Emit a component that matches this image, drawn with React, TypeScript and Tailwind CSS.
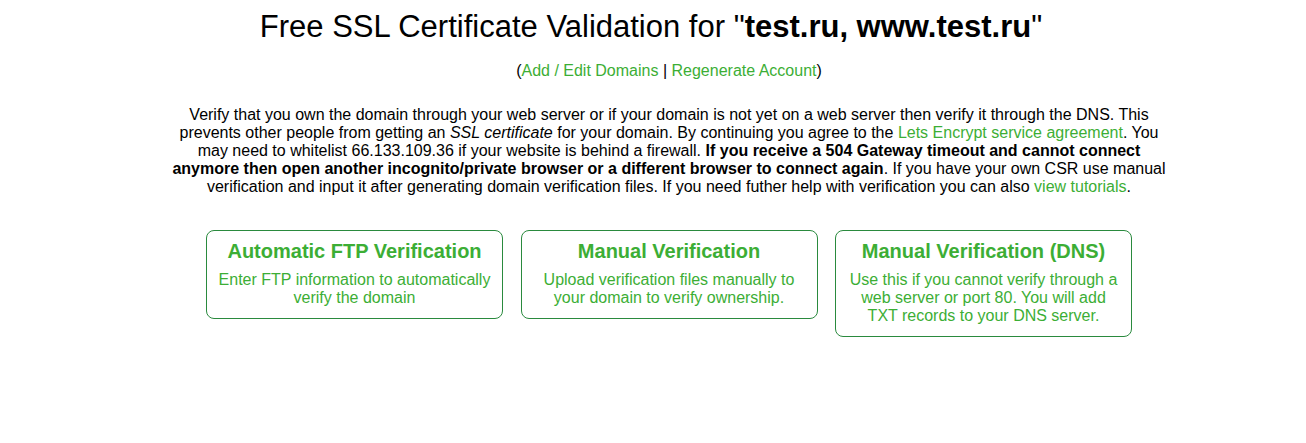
import React from "react";

const cards = [
  {
    title: "Automatic FTP Verification",
    text: "Enter FTP information to automatically verify the domain",
  },
  {
    title: "Manual Verification",
    text: "Upload verification files manually to your domain to verify ownership.",
  },
  {
    title: "Manual Verification (DNS)",
    text: "Use this if you cannot verify through a web server or port 80. You will add TXT records to your DNS server.",
  },
];

export default function App() {
  return (
    <div
      className="min-h-[443px] bg-white text-black pl-[32px]"
      style={{ fontFamily: '"Liberation Sans", Arial, sans-serif' }}
    >
      <div className="mx-auto w-[1000px] text-center">
        <h1 className="pt-[9px] pr-[36px] text-[31px] leading-[36px] font-normal">
          Free SSL Certificate Validation for "<b>test.ru, www.test.ru</b>"
        </h1>
        <div className="mt-[17px] text-[16px] leading-[18px]">
          (<a className="text-[#3cae35]">Add / Edit Domains</a> |{" "}
          <a className="text-[#3cae35]">Regenerate Account</a>)
        </div>
        <p className="mt-[26px] text-[16px] leading-[18px]">
          Verify that you own the domain through your web server or if your domain is not yet on a web server then verify it through the DNS. This prevents other people from getting an <i>SSL certificate</i> for your domain. By continuing you agree to the{" "}
          <a className="text-[#3cae35]">Lets Encrypt service agreement</a>. You may need to whitelist 66.133.109.36 if your website is behind a firewall.{" "}
          <b>If you receive a 504 Gateway timeout and cannot connect anymore then open another incognito/private browser or a different browser to connect again</b>. If you have your own CSR use manual verification and input it after generating domain verification files. If you need futher help with verification you can also{" "}
          <a className="text-[#3cae35]">view tutorials</a>.
        </p>
        <div className="mt-[34px] flex justify-center items-start gap-[17.5px]">
          {cards.map((c) => (
            <div
              key={c.title}
              className="w-[297px] border border-[#2a8a3e] rounded-[8px] px-[10px] pt-[8px] pb-[11px] text-[#3cae35]"
            >
              <div className="text-[20px] leading-[24px] font-bold">{c.title}</div>
              <div className="mt-[8px] text-[16px] leading-[18px]">{c.text}</div>
            </div>
          ))}
        </div>
      </div>
    </div>
  );
}
